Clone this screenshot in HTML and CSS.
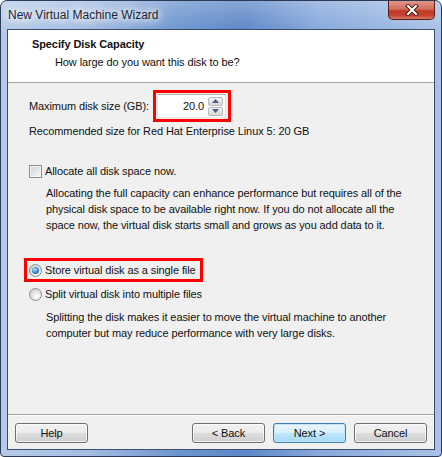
FILE: index.html
```html
<!DOCTYPE html>
<html lang="en">
<head>
  <meta charset="UTF-8">
  <meta name="viewport" content="width=device-width, initial-scale=1.0">
  <title>New Virtual Machine Wizard</title>
  <link rel="stylesheet" href="styles.css">
</head>
<body>
<div class="window">
  <div class="titlebar">
    <span class="caption">New Virtual Machine Wizard</span>
    <span class="close">
      <svg width="14" height="12" viewBox="0 0 14 12">
        <path d="M3 2 L11 10 M11 2 L3 10" stroke="#4a1a14" stroke-width="4" stroke-linecap="square"/>
        <path d="M3 2 L11 10 M11 2 L3 10" stroke="#fff" stroke-width="2" stroke-linecap="square"/>
      </svg>
    </span>
  </div>

  <div class="client">
    <div class="header">
      <div class="header-title">Specify Disk Capacity</div>
      <div class="header-sub">How large do you want this disk to be?</div>
    </div>

    <div class="body">
      <div class="size-row">
        <span class="size-label">Maximum disk size (GB):</span>
        <span class="marked spin-mark">
          <span class="spin">
            <span class="spin-value">20.0</span>
            <span class="spin-buttons">
              <span class="spin-btn">
                <svg width="7" height="4" viewBox="0 0 7 4"><path d="M0 4 L3.5 0 L7 4 Z" fill="#4c6089"/></svg>
              </span>
              <span class="spin-btn">
                <svg width="7" height="4" viewBox="0 0 7 4"><path d="M0 0 L3.5 4 L7 0 Z" fill="#4c6089"/></svg>
              </span>
            </span>
          </span>
        </span>
      </div>
      <div class="rec">Recommended size for Red Hat Enterprise Linux 5: 20 GB</div>

      <div class="option check-row"><span class="checkbox"></span>Allocate all disk space now.</div>
      <div class="desc check-desc">
        Allocating the full capacity can enhance performance but requires all of the<br>
        physical disk space to be available right now. If you do not allocate all the<br>
        space now, the virtual disk starts small and grows as you add data to it.
      </div>

      <div class="option marked radio-mark"><span class="radio checked"></span>Store virtual disk as a single file</div>
      <div class="option split-row"><span class="radio"></span>Split virtual disk into multiple files</div>
      <div class="desc split-desc">
        Splitting the disk makes it easier to move the virtual machine to another<br>
        computer but may reduce performance with very large disks.
      </div>
    </div>

    <div class="footer">
      <button class="btn help">Help</button>
      <button class="btn">&lt; Back</button>
      <button class="btn default">Next &gt;</button>
      <button class="btn">Cancel</button>
    </div>
  </div>
</div>
</body>
</html>
```

FILE: styles.css
```css
body {
  margin: 0;
  font-family: "Liberation Sans", Arial, sans-serif;
  font-size: 11px;
  letter-spacing: -0.1px;
  color: #111;
  background: #fff;
}

/* window frame */
.window {
  box-sizing: border-box;
  width: 442px;
  height: 457px;
  border: 1px solid #2c3a55;
  border-radius: 7px 7px 4px 4px;
  padding: 0 6px 6px 6px;
  display: flex;
  flex-direction: column;
  background:
    linear-gradient(to bottom, rgba(255, 255, 255, 0.25), rgba(255, 255, 255, 0) 30px),
    linear-gradient(to right, #b6cbe8 0%, #a4bde2 20%, #6d95cf 40%, #5c87c7 55%, #86a8db 72%, #a9c2e6 100%);
}
.titlebar {
  height: 28px;
  display: flex;
  justify-content: space-between;
  align-items: flex-start;
  padding-left: 1px;
}
.caption {
  font-size: 12px;
  letter-spacing: 0;
  line-height: 28px;
  color: #1b2436;
  text-shadow: 0 0 6px #fff, 0 0 10px #fff, 0 0 14px rgba(255, 255, 255, 0.8);
}
.close {
  box-sizing: border-box;
  width: 47px;
  height: 19px;
  display: flex;
  align-items: center;
  justify-content: center;
  border: 1px solid #5a1e1a;
  border-top: none;
  border-radius: 0 0 5px 5px;
  background: linear-gradient(to bottom, #e0998a 0%, #d06e5d 45%, #c23a25 55%, #c4432e 80%, #d97a66 100%);
}

/* client area */
.client {
  flex: 1;
  display: flex;
  flex-direction: column;
  border: 1px solid #3c4e6e;
  background: #f0f0f0;
}
.header {
  height: 46px;
  padding: 6px 0 0 24px;
  background: #fff;
  border-bottom: 1px solid #a0a0a0;
}
.header-title {
  font-weight: bold;
  line-height: 16px;
}
.header-sub {
  line-height: 16px;
  margin: 2px 0 0 23px;
}

.body {
  flex: 1;
  display: flex;
  flex-direction: column;
  align-items: flex-start;
  padding: 7px 0 0 21px;
}
.size-row {
  display: flex;
  align-items: center;
  height: 32px;
}
.size-label {
  width: 124px;
}
.marked {
  border: 3px solid #f00;
}
.spin-mark {
  box-sizing: border-box;
  width: 78px;
  height: 32px;
  padding: 1px 2px 1px 1px;
  display: flex;
}
.spin {
  flex: 1;
  display: flex;
  align-items: center;
  border: 1px solid #abadb3;
  border-color: #abadb3 #dbdfe6 #e3e9ef #e2e3ea;
  background: #fff;
}
.spin-value {
  flex: 1;
  text-align: right;
  padding-right: 4px;
}
.spin-buttons {
  display: flex;
  flex-direction: column;
  gap: 1px;
  margin-right: 2px;
}
.spin-btn {
  box-sizing: border-box;
  width: 15px;
  height: 9px;
  display: flex;
  align-items: center;
  justify-content: center;
  border: 1px solid #b5bac2;
  border-radius: 2px;
  background: linear-gradient(to bottom, #f6f6f6, #e4e4e4 50%, #d9d9d9);
}
.rec {
  line-height: 16px;
  margin-top: 1px;
}

.option {
  display: flex;
  align-items: center;
  line-height: 16px;
}
.check-row {
  margin-top: 24px;
}
.desc {
  line-height: 16px;
  margin-left: 17px;
  white-space: nowrap;
}
.check-desc {
  margin-top: 6px;
}
.radio-mark {
  margin: 25px 0 0 -5px;
  padding: 1px 4px 1px 2px;
}
.split-row {
  margin-top: 4px;
}
.split-desc {
  margin-top: 7px;
}

.checkbox {
  box-sizing: border-box;
  width: 13px;
  height: 13px;
  margin-right: 3px;
  border: 1px solid #8e8f8f;
  background: linear-gradient(135deg, #cfd2d6, #f7f7f7);
  box-shadow: inset 0 0 0 1px #f4f4f4;
}
.radio {
  box-sizing: border-box;
  width: 13px;
  height: 13px;
  margin-right: 3px;
  border: 1px solid #8e8f8f;
  border-radius: 50%;
  background: radial-gradient(circle at 65% 70%, #ffffff, #dcdcdc 60%, #c8c8c8);
  display: flex;
  align-items: center;
  justify-content: center;
}
.radio.checked::after {
  content: "";
  width: 7px;
  height: 7px;
  border-radius: 50%;
  background: radial-gradient(circle at 40% 35%, #b5e3fb, #3c8bd4 50%, #1b4f8f);
}

/* buttons */
.footer {
  display: flex;
  gap: 8px;
  padding: 8px 7px 6px 7px;
  border-top: 1px solid #a0a0a0;
  box-shadow: inset 0 1px #fff;
}
.btn {
  box-sizing: border-box;
  width: 73px;
  height: 20px;
  padding: 0;
  font-family: inherit;
  font-size: 11px;
  letter-spacing: -0.1px;
  color: #111;
  border: 1px solid #707070;
  border-radius: 3px;
  background: linear-gradient(to bottom, #f2f2f2 0%, #ebebeb 50%, #dddddd 50%, #cfcfcf 100%);
  box-shadow: inset 0 0 0 1px rgba(255, 255, 255, 0.7);
}
.btn.help {
  margin-right: auto;
}
.btn.default {
  border-color: #3c7fb1;
  background: linear-gradient(to bottom, #eaf6fd 0%, #d9f0fc 50%, #bee6fd 50%, #a7d9f5 100%);
  box-shadow: inset 0 0 0 1px #bfe6fb;
}
```
